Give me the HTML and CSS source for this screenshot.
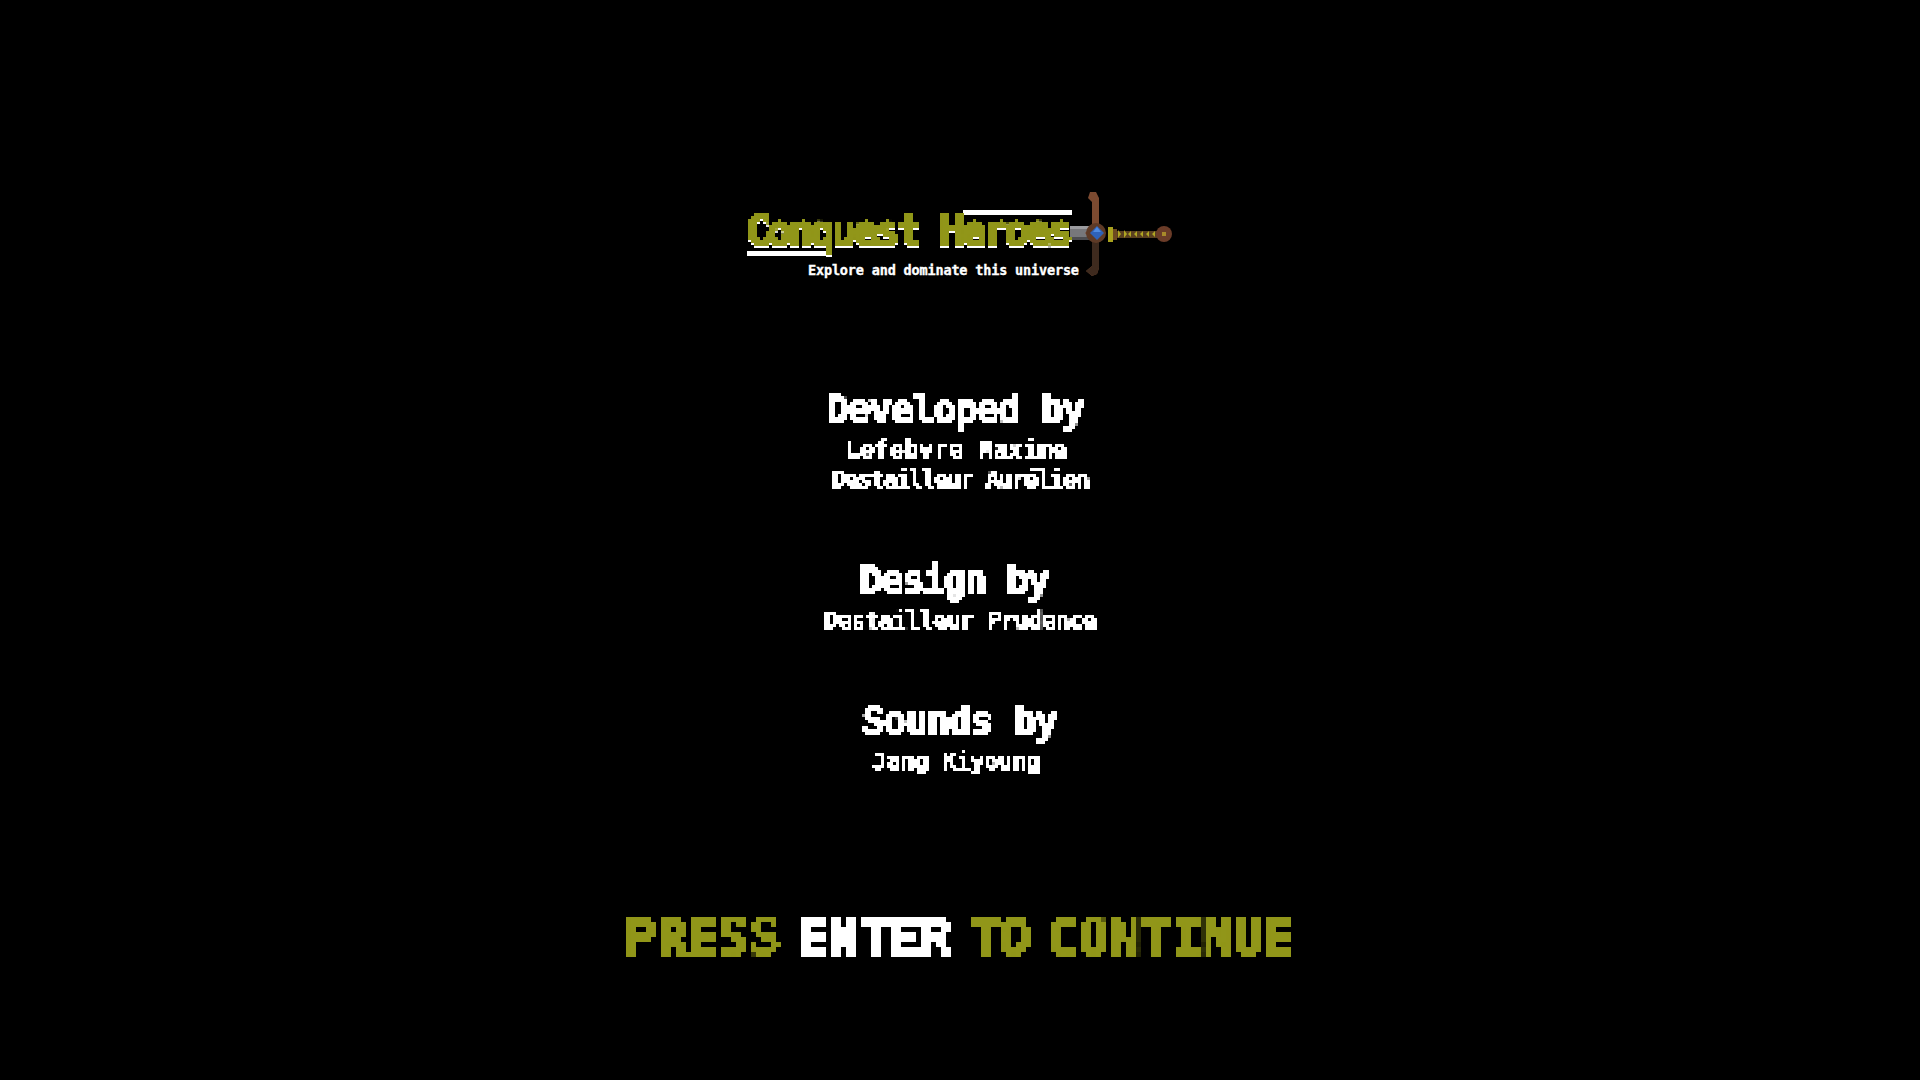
FILE: index.html
```html
<!DOCTYPE html>
<html lang="en">
<head>
<meta charset="utf-8">
<title>Conquest Heroes</title>
<link rel="stylesheet" href="styles.css">
</head>
<body>
<svg class="defs" width="0" height="0" xmlns="http://www.w3.org/2000/svg" aria-hidden="true">
  <filter id="pix3" x="-10%" y="-20%" width="120%" height="140%" color-interpolation-filters="sRGB">
    <feFlood x="1" y="1" width="1" height="1" flood-color="#000"/>
    <feComposite x="0" y="0" width="3" height="3"/>
    <feTile result="grid"/>
    <feComposite in="SourceGraphic" in2="grid" operator="in"/>
    <feMorphology operator="dilate" radius="1"/>
    <feComponentTransfer><feFuncA type="linear" slope="12" intercept="-4"/></feComponentTransfer>
  </filter>
  <filter id="pix5" x="-10%" y="-20%" width="120%" height="140%" color-interpolation-filters="sRGB">
    <feFlood x="2" y="2" width="1" height="1" flood-color="#000"/>
    <feComposite x="0" y="0" width="5" height="5"/>
    <feTile result="grid"/>
    <feComposite in="SourceGraphic" in2="grid" operator="in"/>
    <feMorphology operator="dilate" radius="2"/>
    <feComponentTransfer><feFuncA type="linear" slope="12" intercept="-4"/></feComponentTransfer>
  </filter>
  <filter id="pixlogo" x="-5%" y="-20%" width="110%" height="140%" color-interpolation-filters="sRGB">
    <feFlood x="746" y="217" width="1" height="1" flood-color="#000"/>
    <feComposite x="745" y="216" width="3" height="3"/>
    <feTile result="grid"/>
    <feComposite in="SourceGraphic" in2="grid" operator="in"/>
    <feMorphology operator="dilate" radius="1"/>
    <feComponentTransfer result="blocks"><feFuncA type="linear" slope="12" intercept="-4"/></feComponentTransfer>
    <feOffset dx="0" dy="2" result="down"/>
    <feFlood flood-color="#fff"/>
    <feComposite in2="down" operator="in" result="edge"/>
    <feMerge><feMergeNode in="edge"/><feMergeNode in="blocks"/></feMerge>
  </filter>
</svg>
<main class="screen">
  <svg class="logo" width="460" height="100" viewBox="730 180 460 100" xmlns="http://www.w3.org/2000/svg">
    <rect x="1070" y="226" width="22" height="14" fill="#77777b"/>
    <rect x="1070" y="226" width="22" height="3" fill="#9b9b9f"/>
    <rect x="1070" y="237" width="22" height="3" fill="#4c4c50"/>
    <path d="M1090 192 L1096 192 L1099 198 L1099 226 L1106 233 L1099 240 L1099 268 L1097 274 L1092 276 L1086 271 L1092 266 L1092 240 L1085 233 L1092 226 L1092 202 L1088 198 Z" fill="#7c4a30"/>
    <path d="M1092 240 L1099 240 L1099 268 L1097 274 L1092 276 L1086 271 L1092 266 Z" fill="#3e2a1e"/>
    <circle cx="1096" cy="233" r="10" fill="#5e3a26"/>
    <path d="M1097 226 L1104 233 L1097 240 L1090 233 Z" fill="#2f62b8"/>
    <path d="M1097 227 L1101 232 L1093 232 Z" fill="#4f8ae0"/>
    <rect x="1108" y="227" width="5" height="15" fill="#a9a21e"/>
    <rect x="1113" y="229" width="4" height="11" fill="#6d4a20"/>
    <rect x="1117" y="231" width="41" height="7" fill="#5a4020"/>
    <path d="M1118 230 l3 4 l-3 4 Z M1124 230 l3 4 l-3 4 Z M1131 231 l-3 3 l3 3 Z M1137 231 l-3 3 l3 3 Z M1143 231 l-3 3 l3 3 Z M1149 231 l-3 3 l3 3 Z M1155 231 l-3 3 l3 3 Z" fill="#b0a622"/>
    <circle cx="1164" cy="234" r="8" fill="#6b3c28"/>
    <rect x="1162" y="232" width="4" height="4" fill="#a88a2a"/>
    <rect x="963" y="210" width="109" height="5" fill="#fff"/>
    <rect x="747" y="251" width="80" height="5" fill="#fff"/>
    <text class="logo-title" x="745" y="245" textLength="328" lengthAdjust="spacing">Conquest Heroes</text>
    <text class="logo-tag" x="808" y="275" textLength="271" lengthAdjust="spacing">Explore and dominate this universe</text>
  </svg>

  <section class="credit">
    <h2 class="credit-title credit-title--dev">Developed by</h2>
    <p class="credit-name credit-name--lefebvre">Lefebvre Maxime</p>
    <p class="credit-name credit-name--aurelien">Destailleur Aurélien</p>
  </section>
  <section class="credit">
    <h2 class="credit-title credit-title--design">Design by</h2>
    <p class="credit-name credit-name--prudence">Destailleur Prudence</p>
  </section>
  <section class="credit">
    <h2 class="credit-title credit-title--sounds">Sounds by</h2>
    <p class="credit-name credit-name--jang">Jang Kiyoung</p>
  </section>

  <p class="prompt">PRESS <span class="prompt-key">ENTER</span> TO CONTINUE</p>
</main>
</body>
</html>
```
FILE: styles.css
```css
* { box-sizing: border-box; }
html, body { margin: 0; height: 100%; background: #000; }
.defs { display: block; height: 0; }
.screen {
  height: 1080px;
  overflow: hidden;
  padding-top: 180px;
  display: flex;
  flex-direction: column;
  align-items: center;
  background: #000;
  color: #fff;
  font-family: "DejaVu Sans Mono", "Liberation Mono", monospace;
  font-weight: 700;
}
.logo { display: block; flex: none; }
.logo-title {
  font-family: "DejaVu Sans Mono", monospace;
  font-weight: 700;
  font-size: 42px;
  fill: #919619;
  stroke: #919619;
  stroke-width: 2px;
  filter: url(#pixlogo);
}
.logo-tag {
  font-family: "DejaVu Sans Mono", monospace;
  font-weight: 700;
  font-size: 13.5px;
  fill: #fff;
  stroke: #fff;
  stroke-width: 0.35px;
}
.credit {
  display: flex;
  flex-direction: column;
  align-items: center;
  margin-bottom: 63px;
}
.credit:first-of-type { margin-top: 107px; }
.credit-title {
  margin: 0;
  font-size: 38px;
  line-height: 44px;
  height: 48px;
  letter-spacing: -1.95px;
  -webkit-text-stroke: 1.8px #fff;
  white-space: nowrap;
  filter: url(#pix3);
}
.credit-title--dev { margin-right: 10px; letter-spacing: -1.45px; }
.credit-title--design { margin-right: 12px; }
.credit-title--sounds { margin-right: 1px; letter-spacing: -1.2px; }
.credit-name {
  margin: 0;
  font-size: 24.5px;
  line-height: 30px;
  height: 30px;
  letter-spacing: -1.95px;
  -webkit-text-stroke: 0.7px #fff;
  white-space: nowrap;
  filter: url(#pix3);
}
.credit-name--lefebvre { margin-right: 8px; letter-spacing: 0.1px; }
.credit-name--prudence { letter-spacing: -1.15px; }
.credit-name--jang { margin-right: 8px; letter-spacing: -0.75px; }
.prompt {
  margin: 67px 0 0;
  font-size: 52px;
  line-height: 60px;
  letter-spacing: -0.4px;
  word-spacing: -14px;
  color: #919619;
  -webkit-text-stroke: 2.2px currentColor;
  white-space: pre;
  filter: url(#pix5);
}
.prompt-key { color: #fff; }
```
